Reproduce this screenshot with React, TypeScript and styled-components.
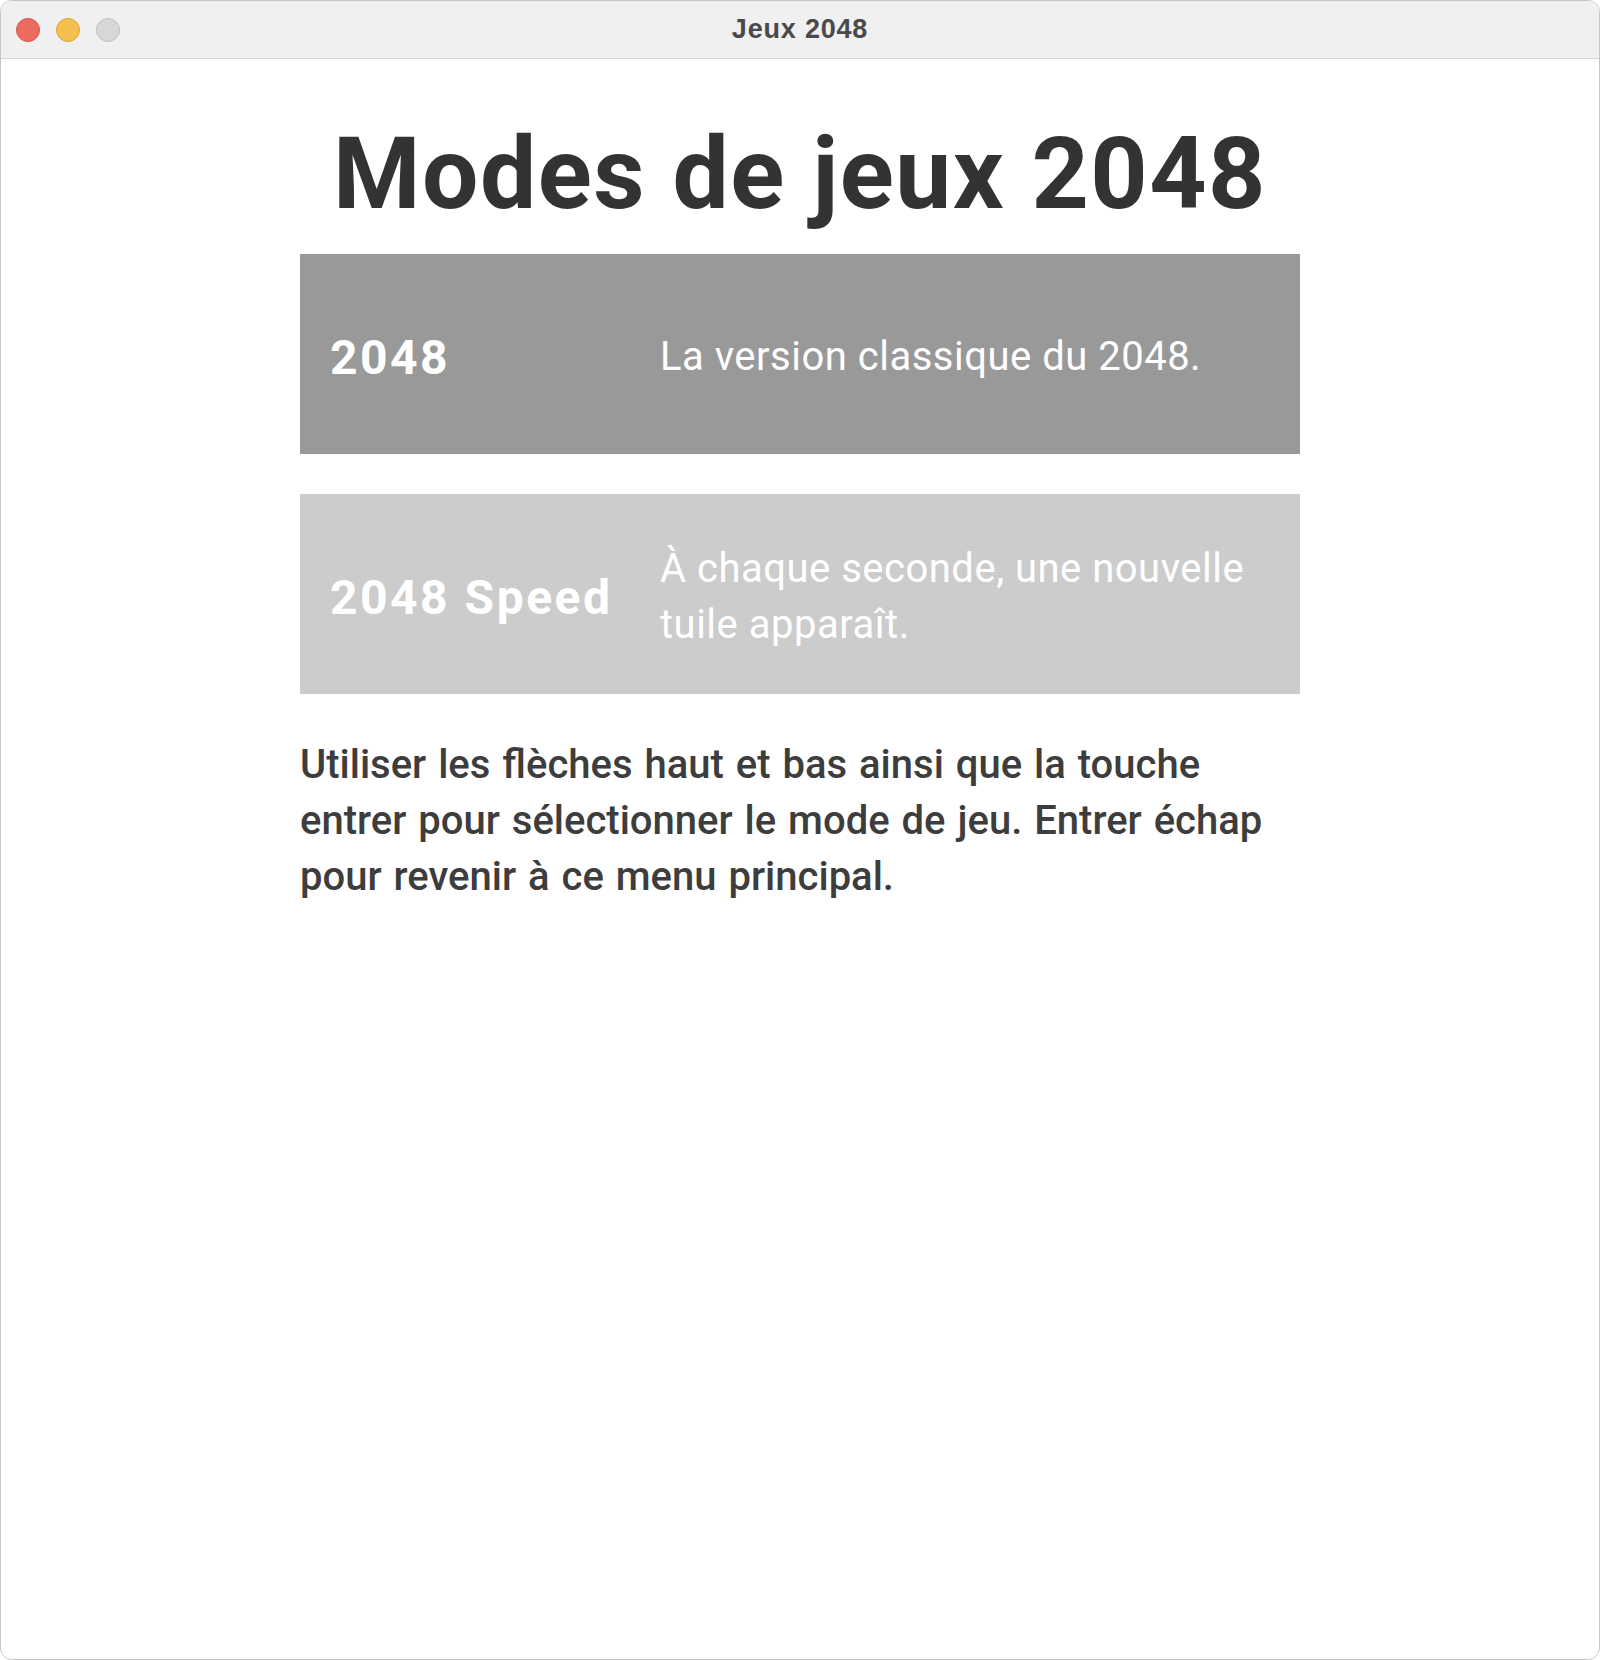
import React from "react";
import styled, { createGlobalStyle } from "styled-components";

const GlobalStyle = createGlobalStyle`
  html, body {
    margin: 0;
    padding: 0;
    background: #ffffff;
  }
  * { box-sizing: border-box; }
`;

const Window = styled.div`
  width: 1600px;
  height: 1660px;
  border: 1px solid #c6c6c6;
  border-radius: 12px;
  overflow: hidden;
  background: #ffffff;
  display: flex;
  flex-direction: column;
`;

const TitleBar = styled.header`
  height: 58px;
  flex-shrink: 0;
  background: #f0f0f0;
  border-bottom: 1px solid #d6d6d6;
  display: grid;
  grid-template-columns: 1fr auto 1fr;
  align-items: center;
`;

const Lights = styled.div`
  display: flex;
  gap: 16px;
  padding-left: 15px;
`;

const Light = styled.span<{ $fill: string; $edge: string }>`
  width: 24px;
  height: 24px;
  border-radius: 50%;
  background: ${(p) => p.$fill};
  border: 1px solid ${(p) => p.$edge};
`;

const WindowTitle = styled.div`
  font-family: "Liberation Sans", Arial, sans-serif;
  font-weight: 700;
  font-size: 27px;
  letter-spacing: 0.8px;
  color: #4a4a4a;
`;

const Content = styled.main`
  width: 1000px;
  margin: 0 auto;
  padding-top: 55px;
  font-family: Roboto, "Noto Sans", sans-serif;
`;

const Heading = styled.h1`
  margin: 0;
  text-align: center;
  font-size: 100px;
  line-height: 120px;
  font-weight: 700;
  letter-spacing: 1.5px;
  color: #333333;
`;

const ModeList = styled.ul`
  list-style: none;
  margin: 20px 0 0;
  padding: 0;
  display: flex;
  flex-direction: column;
  gap: 40px;
`;

const ModeCard = styled.li<{ $selected: boolean }>`
  height: 200px;
  padding: 6px 30px 0;
  display: grid;
  grid-template-columns: 330px 1fr;
  align-items: center;
  background: ${(p) => (p.$selected ? "#999999" : "#cccccc")};
  color: #ffffff;
`;

const ModeName = styled.span`
  font-size: 48px;
  font-weight: 700;
  letter-spacing: 2.5px;
`;

const ModeDesc = styled.span`
  font-size: 40px;
  line-height: 56px;
  font-weight: 400;
  letter-spacing: 0.5px;
`;

const Help = styled.p`
  margin: 43px 0 0;
  font-size: 40px;
  line-height: 56px;
  font-weight: 500;
  word-spacing: 2px;
  color: #3d3d3d;
`;

const modes = [
  { name: "2048", desc: "La version classique du 2048.", selected: true },
  { name: "2048 Speed", desc: "À chaque seconde, une nouvelle tuile apparaît.", selected: false },
];

export default function App() {
  return (
    <>
      <GlobalStyle />
      <Window>
        <TitleBar>
          <Lights>
            <Light $fill="#ed6a5e" $edge="#d35549" />
            <Light $fill="#f5bf4f" $edge="#d9a33f" />
            <Light $fill="#d7d7d7" $edge="#bfbfbf" />
          </Lights>
          <WindowTitle>Jeux 2048</WindowTitle>
          <span />
        </TitleBar>
        <Content>
          <Heading>Modes de jeux 2048</Heading>
          <ModeList>
            {modes.map((m) => (
              <ModeCard key={m.name} $selected={m.selected}>
                <ModeName>{m.name}</ModeName>
                <ModeDesc>{m.desc}</ModeDesc>
              </ModeCard>
            ))}
          </ModeList>
          <Help>
            Utiliser les flèches haut et bas ainsi que la touche entrer pour sélectionner le mode de
            jeu. Entrer échap pour revenir à ce menu principal.
          </Help>
        </Content>
      </Window>
    </>
  );
}
